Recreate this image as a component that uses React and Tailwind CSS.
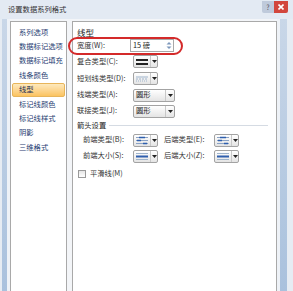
import React from "react";

const F = { fontFamily: '"Noto Sans CJK SC", "Noto Sans", sans-serif' };

function Caret() {
  return (
    <div className="flex h-full w-[9px] items-center justify-center border-l border-[#c8c8c8]">
      <svg width="5" height="3" viewBox="0 0 5 3"><path d="M0 0H5L2.5 3Z" fill="#222" /></svg>
    </div>
  );
}

function DD({ w, children }) {
  return (
    <div className={`flex h-[13px] ${w} shrink-0 items-center rounded-[2px] border border-[#a3a3a3] bg-gradient-to-b from-white to-[#e4e4e4]`}>
      <div className="flex flex-1 items-center px-[2px]">{children}</div>
      <Caret />
    </div>
  );
}

function IconCompound() {
  return (
    <svg width="12" height="8" viewBox="0 0 12 8">
      <rect x="0" y="1" width="12" height="2" fill="#222" />
      <rect x="0" y="5" width="12" height="2" fill="#222" />
    </svg>
  );
}
function IconDash() {
  return (
    <svg width="12" height="8" viewBox="0 0 12 8">
      <path d="M0 2H12M0 4H2M3 4H5M6 4H8M9 4H11M0 6H1M2 6H3M4 6H5M6 6H7M8 6H9M10 6H11" stroke="#9fb4cc" strokeWidth="1" />
    </svg>
  );
}
function IconArrow() {
  return (
    <svg width="12" height="9" viewBox="0 0 12 9">
      <path d="M0 1.5H12M0 4.5H12M0 7.5H12" stroke="#8aa2c4" strokeWidth="1" />
      <path d="M3 1.5H9M1 4.5H5M7 7.5H11" stroke="#2f5fae" strokeWidth="1.4" />
    </svg>
  );
}
function IconSize() {
  return (
    <svg width="12" height="9" viewBox="0 0 12 9">
      <path d="M0 1.5H12M0 7.5H12" stroke="#9fb4cc" strokeWidth="1" />
      <rect x="0" y="3.5" width="12" height="2" fill="#2f5fae" />
    </svg>
  );
}

function Row({ label, children, h = "h-[16px]" }) {
  return (
    <div className={`flex ${h} items-center`}>
      <div className="w-[56px] shrink-0 whitespace-nowrap text-[7.3px] leading-none text-[#333]">{label}</div>
      {children}
    </div>
  );
}

const items = ["系列选项", "数据标记选项", "数据标记填充", "线条颜色", "线型", "标记线颜色", "标记线样式", "阴影", "三维格式"];

export default function App() {
  return (
    <div className="relative flex h-[291px] w-[293px] flex-col overflow-hidden bg-[#e2e9f2]" style={F}>
      <div className="relative z-10 flex h-[19px] w-[293px] shrink-0 items-start bg-[#e3eaf3]">
        <div className="flex-1 whitespace-nowrap pl-[8px] pt-[6px] text-[7.3px] leading-none text-[#333]">设置数据系列格式</div>
        <div className="mt-[1px] flex h-[12px] w-[12px] shrink-0 items-center justify-center rounded-bl-[2px] bg-[#bfcadb] text-[7px] leading-none text-[#556]">?</div>
        <div className="mt-[1px] flex h-[12px] w-[14px] shrink-0 items-center justify-center rounded-br-[2px] bg-[#d2463c]">
          <svg width="6" height="6" viewBox="0 0 6 6"><path d="M0.5 0.5L5.5 5.5M5.5 0.5L0.5 5.5" stroke="#fff" strokeWidth="1.6" /></svg>
        </div>
        <div className="w-[5px] shrink-0" />
      </div>
      <div className="flex h-[272px] w-[293px] shrink-0">
        <div className="w-[2px] shrink-0 bg-[#e6ecf3]" />
        <div className="w-[5px] shrink-0 bg-gradient-to-b from-[#c9d7e8] to-[#a9c1dd]" />
        <div className="w-[3px] shrink-0 bg-[#eef2f7]" />
        <div className="flex w-[267px] shrink-0 flex-col bg-[#f3f5f8] pt-[2px]">
          <div className="flex flex-1">
            <div className="w-[57px] shrink-0 border border-b-0 border-[#a9a9a9] bg-white pt-[3px]">
              {items.map((t) => (
                <div
                  key={t}
                  className={
                    t === "线型"
                      ? "mx-[1px] flex h-[14.4px] items-center whitespace-nowrap rounded-[2px] border border-[#e8b55a] bg-gradient-to-b from-[#fde9bd] to-[#fbc35f] pl-[6px] text-[7.3px] leading-none text-[#1b2f55]"
                      : "mx-[1px] flex h-[14.4px] items-center whitespace-nowrap pl-[7px] text-[7.3px] leading-none text-[#1f3d72]"
                  }
                >
                  {t}
                </div>
              ))}
            </div>
            <div className="w-[5px] shrink-0" />
            <div className="min-w-0 flex-1 border border-b-0 border-[#a9a9a9] bg-white pl-[4px] pt-[4px]">
              <div className="flex h-[12px] items-center text-[8.5px] leading-none text-[#222]">线型</div>
              <Row label="宽度(W):" h="h-[15px]">
                <div className="ml-[-3px] flex h-[13px] w-[44px] items-center border border-[#a8a8a8] bg-white pl-[2px]">
                  <span className="flex-1 whitespace-nowrap text-[7.3px] leading-none text-[#222]">15 磅</span>
                  <svg width="6" height="9" viewBox="0 0 6 9" className="mr-[1px]">
                    <path d="M0.5 3.5L3 1L5.5 3.5Z" fill="#7d97bb" />
                    <path d="M0.5 5.5L3 8L5.5 5.5Z" fill="#7d97bb" />
                  </svg>
                </div>
              </Row>
              <Row label="复合类型(C):" h="h-[17px]">
                <DD w="w-[25px]"><IconCompound /></DD>
              </Row>
              <Row label="短划线类型(D):" h="h-[17px]">
                <DD w="w-[25px]"><IconDash /></DD>
              </Row>
              <Row label="线端类型(A):" h="h-[16px]">
                <DD w="w-[42px]"><span className="text-[7.3px] leading-none text-[#222]">圆形</span></DD>
              </Row>
              <Row label="联接类型(J):" h="h-[16px]">
                <DD w="w-[42px]"><span className="text-[7.3px] leading-none text-[#222]">圆形</span></DD>
              </Row>
              <div className="flex h-[13px] items-center pr-[8px]">
                <span className="whitespace-nowrap text-[7.3px] leading-none text-[#222]">箭头设置</span>
                <div className="ml-[3px] h-px flex-1 bg-[#d5dbe3]" />
              </div>
              {[
                ["前端类型(B):", "后端类型(E):", IconArrow],
                ["前端大小(S):", "后端大小(Z):", IconSize],
              ].map(([a, b, I]) => (
                <div key={a} className="flex h-[16px] items-center pl-[6px]">
                  <div className="w-[50px] shrink-0 whitespace-nowrap text-[7.3px] leading-none text-[#333]">{a}</div>
                  <DD w="w-[25px]"><I /></DD>
                  <div className="ml-[6px] w-[50px] shrink-0 whitespace-nowrap text-[7.3px] leading-none text-[#333]">{b}</div>
                  <DD w="w-[25px]"><I /></DD>
                </div>
              ))}
              <div className="mt-[3px] flex h-[14px] items-center pl-[1px]">
                <div className="h-[8px] w-[8px] border border-[#9a9a9a] bg-gradient-to-b from-[#e6e6e6] to-white" />
                <span className="ml-[4px] whitespace-nowrap text-[7.3px] leading-none text-[#333]">平滑线(M)</span>
              </div>
            </div>
          </div>
        </div>
        <div className="w-[3px] shrink-0 bg-[#eef2f7]" />
        <div className="w-[7px] shrink-0 bg-gradient-to-b from-[#c9d7e8] to-[#a9c1dd]" />
        <div className="w-[6px] shrink-0 bg-[#e6ecf3]" />
      </div>
      <div className="pointer-events-none absolute left-[68px] top-[37px] z-20 h-[18px] w-[115px] rounded-[9px] border-2 border-[#d42a2a]" />
    </div>
  );
}
